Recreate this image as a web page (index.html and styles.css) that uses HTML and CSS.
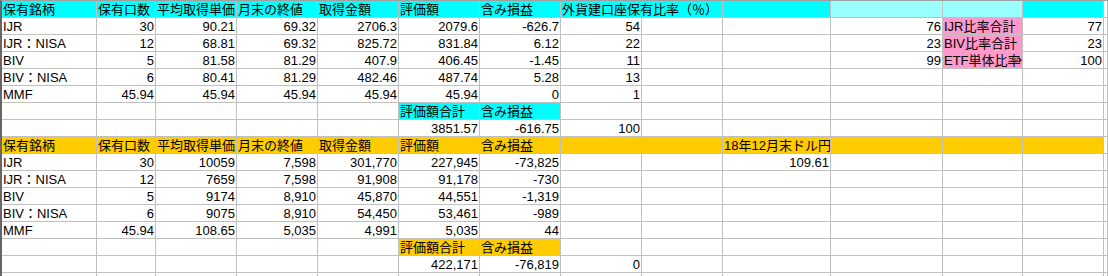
FILE: index.html
```html
<!DOCTYPE html>
<html lang="ja">
<head>
<meta charset="utf-8">
<title>保有銘柄</title>
<link rel="stylesheet" href="styles.css">
</head>
<body>
<div class="sheet">
  <!-- row 1 -->
  <div class="c cy">保有銘柄</div><div class="c cy">保有口数</div><div class="c cy">平均取得単価</div><div class="c cy">月末の終値</div><div class="c cy">取得金額</div><div class="c cy">評価額</div><div class="c cy">含み損益</div><div class="c cy span2">外貨建口座保有比率（％）</div><div class="c cy"></div><div class="c lc"></div><div class="c lc"></div><div class="c cy"></div><div class="c"></div>
  <!-- row 2 -->
  <div class="c">IJR</div><div class="c r">30</div><div class="c r">90.21</div><div class="c r">69.32</div><div class="c r">2706.3</div><div class="c r">2079.6</div><div class="c r">-626.7</div><div class="c r">54</div><div class="c"></div><div class="c"></div><div class="c r">76</div><div class="c pk">IJR比率合計</div><div class="c r">77</div><div class="c"></div>
  <!-- row 3 -->
  <div class="c">IJR：NISA</div><div class="c r">12</div><div class="c r">68.81</div><div class="c r">69.32</div><div class="c r">825.72</div><div class="c r">831.84</div><div class="c r">6.12</div><div class="c r">22</div><div class="c"></div><div class="c"></div><div class="c r">23</div><div class="c pk">BIV比率合計</div><div class="c r">23</div><div class="c"></div>
  <!-- row 4 -->
  <div class="c">BIV</div><div class="c r">5</div><div class="c r">81.58</div><div class="c r">81.29</div><div class="c r">407.9</div><div class="c r">406.45</div><div class="c r">-1.45</div><div class="c r">11</div><div class="c"></div><div class="c"></div><div class="c r">99</div><div class="c pk clip">ETF単体比率<span class="tri"></span></div><div class="c r">100</div><div class="c"></div>
  <!-- row 5 -->
  <div class="c">BIV：NISA</div><div class="c r">6</div><div class="c r">80.41</div><div class="c r">81.29</div><div class="c r">482.46</div><div class="c r">487.74</div><div class="c r">5.28</div><div class="c r">13</div><div class="c"></div><div class="c"></div><div class="c"></div><div class="c"></div><div class="c"></div><div class="c"></div>
  <!-- row 6 -->
  <div class="c">MMF</div><div class="c r">45.94</div><div class="c r">45.94</div><div class="c r">45.94</div><div class="c r">45.94</div><div class="c r">45.94</div><div class="c r">0</div><div class="c r">1</div><div class="c"></div><div class="c"></div><div class="c"></div><div class="c"></div><div class="c"></div><div class="c"></div>
  <!-- row 7 -->
  <div class="c"></div><div class="c"></div><div class="c"></div><div class="c"></div><div class="c"></div><div class="c cy">評価額合計</div><div class="c cy">含み損益</div><div class="c"></div><div class="c"></div><div class="c"></div><div class="c"></div><div class="c"></div><div class="c"></div><div class="c"></div>
  <!-- row 8 -->
  <div class="c"></div><div class="c"></div><div class="c"></div><div class="c"></div><div class="c"></div><div class="c r">3851.57</div><div class="c r">-616.75</div><div class="c r">100</div><div class="c"></div><div class="c"></div><div class="c"></div><div class="c"></div><div class="c"></div><div class="c"></div>
  <!-- row 9 -->
  <div class="c or">保有銘柄</div><div class="c or">保有口数</div><div class="c or">平均取得単価</div><div class="c or">月末の終値</div><div class="c or">取得金額</div><div class="c or">評価額</div><div class="c or">含み損益</div><div class="c or"></div><div class="c or"></div><div class="c or">18年12月末ドル円</div><div class="c or"></div><div class="c or"></div><div class="c or"></div><div class="c"></div>
  <!-- row 10 -->
  <div class="c">IJR</div><div class="c r">30</div><div class="c r">10059</div><div class="c r">7,598</div><div class="c r">301,770</div><div class="c r">227,945</div><div class="c r">-73,825</div><div class="c"></div><div class="c"></div><div class="c r">109.61</div><div class="c"></div><div class="c"></div><div class="c"></div><div class="c"></div>
  <!-- row 11 -->
  <div class="c">IJR：NISA</div><div class="c r">12</div><div class="c r">7659</div><div class="c r">7,598</div><div class="c r">91,908</div><div class="c r">91,178</div><div class="c r">-730</div><div class="c"></div><div class="c"></div><div class="c"></div><div class="c"></div><div class="c"></div><div class="c"></div><div class="c"></div>
  <!-- row 12 -->
  <div class="c">BIV</div><div class="c r">5</div><div class="c r">9174</div><div class="c r">8,910</div><div class="c r">45,870</div><div class="c r">44,551</div><div class="c r">-1,319</div><div class="c"></div><div class="c"></div><div class="c"></div><div class="c"></div><div class="c"></div><div class="c"></div><div class="c"></div>
  <!-- row 13 -->
  <div class="c">BIV：NISA</div><div class="c r">6</div><div class="c r">9075</div><div class="c r">8,910</div><div class="c r">54,450</div><div class="c r">53,461</div><div class="c r">-989</div><div class="c"></div><div class="c"></div><div class="c"></div><div class="c"></div><div class="c"></div><div class="c"></div><div class="c"></div>
  <!-- row 14 -->
  <div class="c">MMF</div><div class="c r">45.94</div><div class="c r">108.65</div><div class="c r">5,035</div><div class="c r">4,991</div><div class="c r">5,035</div><div class="c r">44</div><div class="c"></div><div class="c"></div><div class="c"></div><div class="c"></div><div class="c"></div><div class="c"></div><div class="c"></div>
  <!-- row 15 -->
  <div class="c"></div><div class="c"></div><div class="c"></div><div class="c"></div><div class="c"></div><div class="c or">評価額合計</div><div class="c or">含み損益</div><div class="c"></div><div class="c"></div><div class="c"></div><div class="c"></div><div class="c"></div><div class="c"></div><div class="c"></div>
  <!-- row 16 -->
  <div class="c"></div><div class="c"></div><div class="c"></div><div class="c"></div><div class="c"></div><div class="c r">422,171</div><div class="c r">-76,819</div><div class="c r">0</div><div class="c"></div><div class="c"></div><div class="c"></div><div class="c"></div><div class="c"></div><div class="c"></div>
  <!-- row 17 -->
  <div class="c"></div><div class="c"></div><div class="c"></div><div class="c"></div><div class="c"></div><div class="c"></div><div class="c"></div><div class="c"></div><div class="c"></div><div class="c"></div><div class="c"></div><div class="c"></div><div class="c"></div><div class="c"></div>
</div>
</body>
</html>
```

FILE: styles.css
```css
html, body {
  margin: 0;
  padding: 0;
  background: #ffffff;
}

body {
  width: 1108px;
  height: 276px;
  overflow: hidden;
  font-family: "Liberation Sans", "Noto Sans CJK JP", sans-serif;
  font-size: 13px;
  color: #000000;
}

.sheet {
  box-sizing: border-box;
  height: 276px;
  overflow: hidden;
  display: grid;
  grid-template-columns: 95px 59px 81px 81px 81px 81px 81px 81px 81px 108px 112px 80px 81px 1fr;
  grid-auto-rows: 17px;
  align-content: start;
  border-left: 2px solid #666666;
  border-top: 1px solid #a0a0a0;
}

.c {
  box-sizing: border-box;
  border-right: 1px solid #c0c0c0;
  border-bottom: 1px solid #c0c0c0;
  padding: 1px 1px 0 1px;
  line-height: 16px;
  white-space: nowrap;
  overflow: hidden;
}

.r {
  text-align: right;
}

.span2 {
  grid-column: span 2;
}

.cy {
  background: #00ffff;
}

.lc {
  background: #99ffff;
}

.or {
  background: #ffcc00;
}

.pk {
  background: #ff99cc;
}

.clip {
  position: relative;
}

.tri {
  position: absolute;
  right: 0;
  top: 5px;
  width: 0;
  height: 0;
  border-top: 3px solid transparent;
  border-bottom: 3px solid transparent;
  border-left: 3px solid #6a1020;
}
```
